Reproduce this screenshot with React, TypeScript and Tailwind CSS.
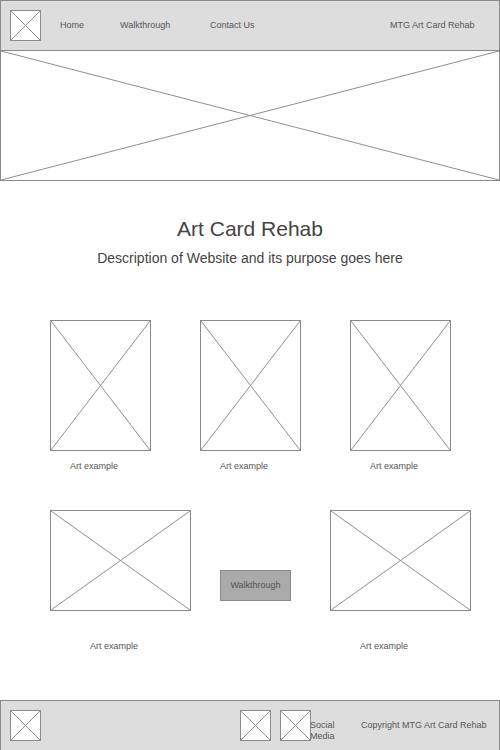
const XBox = ({ className }: { className: string }) => (
  <div className={`relative border border-[#8a8a8a] bg-white ${className}`}>
    <svg className="absolute inset-0 h-full w-full" viewBox="0 0 100 100" preserveAspectRatio="none">
      <line x1="0" y1="0" x2="100" y2="100" stroke="#8f8f8f" strokeWidth="1" vectorEffect="non-scaling-stroke" />
      <line x1="100" y1="0" x2="0" y2="100" stroke="#8f8f8f" strokeWidth="1" vectorEffect="non-scaling-stroke" />
    </svg>
  </div>
);

const Label = ({ text, className }: { text: string; className: string }) => (
  <p className={`text-[9px] leading-[12px] text-[#555] ${className}`}>{text}</p>
);

export default function App() {
  return (
    <div className="flex h-[750px] w-[500px] flex-col bg-white font-['Liberation_Sans',Arial,sans-serif] text-[#555]">
      <header className="flex h-[51px] shrink-0 items-center border border-[#8a8a8a] bg-[#dddddd] text-[9px]">
        <XBox className="ml-[9px] h-[31px] w-[31px]" />
        <span className="ml-[19px] w-[60px]">Home</span>
        <span className="w-[90px]">Walkthrough</span>
        <span className="w-[180px]">Contact Us</span>
        <span>MTG Art Card Rehab</span>
      </header>

      <XBox className="h-[130px] w-[500px] border-t-0" />

      <h1 className="mt-[34px] text-center text-[21px] leading-[28px] text-[#444]">Art Card Rehab</h1>
      <p className="mt-[5px] text-center text-[14px] leading-[20px] text-[#444]">
        Description of Website and its purpose goes here
      </p>

      <div className="mt-[52px] flex gap-[49px] pl-[50px]">
        {[0, 1, 2].map((i) => (
          <div key={i} className="w-[101px]">
            <XBox className="h-[131px] w-[101px]" />
            <Label text="Art example" className="mt-[9px] pl-[20px]" />
          </div>
        ))}
      </div>

      <div className="mt-[38px] flex pl-[50px]">
        <div className="w-[141px]">
          <XBox className="h-[101px] w-[141px]" />
          <Label text="Art example" className="mt-[29px] pl-[40px]" />
        </div>
        <div className="ml-[29px] pt-[60px]">
          <button className="flex h-[31px] w-[71px] items-center justify-center border border-[#8a8a8a] bg-[#aaaaaa] text-[9px] text-[#555]">
            Walkthrough
          </button>
        </div>
        <div className="ml-[39px] w-[141px]">
          <XBox className="h-[101px] w-[141px]" />
          <Label text="Art example" className="mt-[29px] pl-[30px]" />
        </div>
      </div>

      <footer className="mt-auto flex h-[50px] shrink-0 items-center border border-b-0 border-[#8a8a8a] bg-[#dddddd] text-[9px]">
        <XBox className="ml-[9px] h-[31px] w-[31px]" />
        <XBox className="ml-[199px] h-[31px] w-[31px]" />
        <XBox className="ml-[9px] h-[31px] w-[31px]" />
        <span className="-ml-px mt-[10px] w-[51px] leading-[11px]">
          Social
          <br />
          Media
        </span>
        <span>Copyright MTG Art Card Rehab</span>
      </footer>
    </div>
  );
}
